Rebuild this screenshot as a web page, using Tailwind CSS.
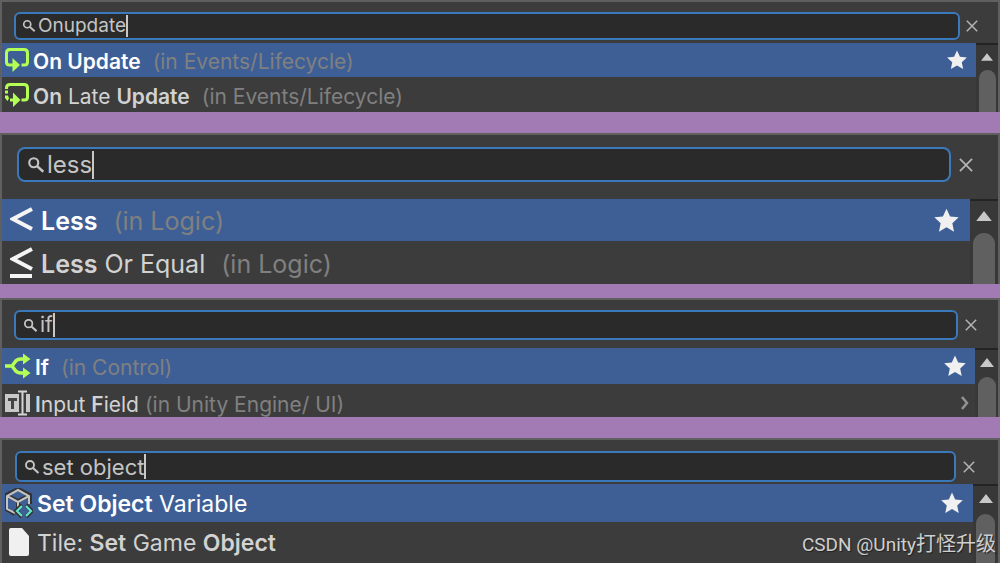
<!DOCTYPE html>
<html lang="en">
<head>
<meta charset="utf-8">
<meta name="viewport" content="width=device-width, initial-scale=1">
<title>Fuzzy finder searches</title>
<script src="https://cdn.jsdelivr.net/npm/@tailwindcss/browser@4"></script>
</head>
<body class="bg-[#a27bb5] font-['Inter','Liberation_Sans',sans-serif] text-[#d2d2d2]">
<svg class="hidden">
  <symbol id="search" viewBox="0 0 16 16"><g fill="none" stroke="#c4c4c4"><circle cx="6" cy="6" r="4" stroke-width="1.9"/><path d="M9 9l5.500 5" stroke-width="2.200"/></g></symbol>
  <symbol id="close" viewBox="0 0 12 12"><path d="M.8.8l10.400 10.400M11.200.8L.8 11.200" fill="none" stroke="#b4b4b4" stroke-width="1.500"/></symbol>
  <symbol id="star" viewBox="0 0 24 24"><path d="M12 1.500l3.200 6.900 7.600.8-5.600 5.200 1.500 7.500-6.700-3.800-6.700 3.800 1.500-7.500-5.600-5.200 7.600-.8z" fill="#f0f0f0"/></symbol>
  <symbol id="up" viewBox="0 0 14 9"><path d="M7 0l7 9H0z" fill="#c8c8c8"/></symbol>
</svg>
<main class="flex min-h-screen flex-col">

  <section class="flex h-28 flex-col overflow-hidden border-x-2 border-t-2 border-[#606060] bg-[#3c3c3c]">
    <div class="flex shrink-0 items-center gap-1.5 pt-2.5 pb-[3px] pl-3 pr-5">
      <label class="flex h-7 flex-1 cursor-text items-center rounded-md border-2 border-[#3a79bb] bg-[#2a2a2a] pl-1.5">
        <svg class="mr-0.5 size-[14px]"><use href="#search"/></svg>
        <input aria-label="Search nodes" value="Onupdate" class="[field-sizing:content] bg-transparent text-[19px] leading-6 text-[#c4c4c4] outline-none"><span class="h-[22px] w-0.5 bg-[#c8c8c8]"></span>
      </label>
      <button aria-label="Clear search"><svg class="size-3"><use href="#close"/></svg></button>
    </div>
    <div class="flex min-h-0 flex-1">
      <div class="flex-1 text-[21px]">
        <button class="flex h-[34px] w-full items-center bg-[#3e5f96] pl-[3px] text-white">
          <svg class="mr-1 size-6" viewBox="0 0 24 24"><path d="M8 17H4.500q-3 0-3-3V5q0-3.500 3.500-3.500h14q3.500 0 3.500 3.500v9q0 3-3 3h-3" fill="none" stroke="#b4ff55" stroke-width="3"/><path d="M7.500 10l7.500 7-7.500 7z" fill="#b4ff55"/></svg>
          <span class="pt-[3px] font-semibold">On Update</span><span class="ml-3 pt-[3px] text-[#808080]">(in Events/Lifecycle)</span>
          <svg class="ml-auto mr-2 size-[22px]"><use href="#star"/></svg>
        </button>
        <button class="flex h-9 w-full items-center pl-[3px]">
          <svg class="mr-1 size-6" viewBox="0 0 24 24"><path d="M1.500 6V5q0-3.500 3.500-3.500h14q3.500 0 3.500 3.500v9q0 3-3 3h-3" fill="none" stroke="#b4ff55" stroke-width="3"/><path d="M0 7.500h3v3H0zM0 12.500h3l1 3-1.500 2.500L0 15z" fill="#b4ff55"/><path d="M8 9.500l7.500 7.500-7.500 7v-5.500H5v-3h3z" fill="#b4ff55"/></svg>
          <span class="pt-[3px]"><b class="font-semibold">On</b> Late <b class="font-semibold">Update</b></span><span class="ml-3 pt-[3px] text-[#808080]">(in Events/Lifecycle)</span>
        </button>
      </div>
      <div class="flex w-[22px] flex-col items-center border-t-2 border-[#242424] bg-[#383838] pt-2">
        <svg class="mb-[9px] h-2 w-3 shrink-0"><use href="#up"/></svg>
        <div class="w-[17px] flex-1 rounded-t-full bg-[#606060]"></div>
      </div>
    </div>
  </section>

  <section class="mt-[21px] flex h-[151px] flex-col overflow-hidden border-x-2 border-t-2 border-[#606060] bg-[#3c3c3c]">
    <div class="flex shrink-0 items-center gap-2 pt-3 pb-[17px] pl-[15px] pr-[25px]">
      <label class="flex h-[35px] flex-1 cursor-text items-center rounded-lg border-2 border-[#3a79bb] bg-[#2a2a2a] pl-2">
        <svg class="mr-0.5 size-[18px]"><use href="#search"/></svg>
        <input aria-label="Search nodes" value="less" class="[field-sizing:content] bg-transparent text-2xl leading-7 text-[#c4c4c4] outline-none"><span class="h-7 w-0.5 bg-[#c8c8c8]"></span>
      </label>
      <button aria-label="Clear search"><svg class="size-3.5"><use href="#close"/></svg></button>
    </div>
    <div class="flex min-h-0 flex-1">
      <div class="flex-1 text-[25px]">
        <button class="flex h-[42px] w-full items-center bg-[#3e5f96] pl-2 text-white">
          <svg class="mr-2 h-[30px] w-[23px]" viewBox="0 0 23 30"><path d="M22 4L3 14l19 10" fill="none" stroke="#f4f4f4" stroke-width="4"/></svg>
          <span class="pt-[3px] font-semibold">Less</span><span class="ml-4 pt-[3px] text-[#808080]">(in Logic)</span>
          <svg class="ml-auto mr-2.5 size-[27px]"><use href="#star"/></svg>
        </button>
        <button class="flex h-[44px] w-full items-center pl-2">
          <svg class="mr-2 h-[32px] w-[23px]" viewBox="0 0 23 32"><path d="M22 2L3 12l19 10M0 29h22" fill="none" stroke="#f4f4f4" stroke-width="4"/></svg>
          <span class="pt-[3px]"><b class="font-semibold">Less</b> Or Equal</span><span class="ml-4 pt-[3px] text-[#808080]">(in Logic)</span>
        </button>
      </div>
      <div class="flex w-7 flex-col items-center border-t-2 border-[#242424] bg-[#383838] pt-2.5">
        <svg class="mb-3 h-2.5 w-4 shrink-0"><use href="#up"/></svg>
        <div class="w-[22px] flex-1 rounded-t-full bg-[#606060]"></div>
      </div>
    </div>
  </section>

  <section class="mt-3.5 flex h-[119px] flex-col overflow-hidden border-x-2 border-t-2 border-[#606060] bg-[#3c3c3c]">
    <div class="flex shrink-0 items-center gap-[7px] pt-2.5 pb-2 pl-3 pr-[21px]">
      <label class="flex h-[30px] flex-1 cursor-text items-center rounded-md border-2 border-[#3a79bb] bg-[#2a2a2a] pl-[7px]">
        <svg class="mr-0.5 size-[15px]"><use href="#search"/></svg>
        <input aria-label="Search nodes" value="if" class="[field-sizing:content] bg-transparent text-[21px] leading-6 text-[#c4c4c4] outline-none"><span class="h-6 w-0.5 bg-[#c8c8c8]"></span>
      </label>
      <button aria-label="Clear search"><svg class="size-3"><use href="#close"/></svg></button>
    </div>
    <div class="flex min-h-0 flex-1">
      <div class="flex-1 text-[21px]">
        <button class="flex h-9 w-full items-center bg-[#3e5f96] pl-[3px] text-white">
          <svg class="mr-1 size-[26px]" viewBox="0 0 26 26"><path d="M0 13h7M20 6h-4q-4 0-6 3l-3 4 3 4q2 3 6 3h4" fill="none" stroke="#b4ff55" stroke-width="3.500"/><path d="M18 .5l7.500 5.500-7.500 5.500zM18 14.500l7.500 5.500-7.500 5.500z" fill="#b4ff55"/></svg>
          <span class="pt-[3px] font-semibold">If</span><span class="ml-3 pt-[3px] text-[#808080]">(in Control)</span>
          <svg class="ml-auto mr-2 size-6"><use href="#star"/></svg>
        </button>
        <button class="flex h-[38px] w-full items-center pl-[3px]">
          <svg class="mr-1 size-[26px]" viewBox="0 0 26 26"><path d="M0 4h14v18H0zM21 4h4v18h-4z" fill="#c8c8c8"/><path d="M3 8h9v3H9v8H6v-8H3z" fill="#444"/><path d="M13 1.500h9M17.500 1v24M13 24.500h9" stroke="#d4d4d4" stroke-width="2"/></svg>
          <span class="pt-[3px]"><b class="font-semibold">I</b>nput <b class="font-semibold">F</b>ield</span><span class="ml-1.5 pt-[3px] text-[#808080]">(in Unity Engine/ UI)</span>
          <svg class="ml-auto mr-1.5 h-3.5 w-2" viewBox="0 0 8 14"><path d="M1 1l5 6-5 6" fill="none" stroke="#949494" stroke-width="2.500"/></svg>
        </button>
      </div>
      <div class="flex w-[23px] flex-col items-center border-t-2 border-[#242424] bg-[#383838] pt-2">
        <svg class="mb-2.5 h-[9px] w-[14px] shrink-0"><use href="#up"/></svg>
        <div class="w-[18px] flex-1 rounded-t-full bg-[#606060]"></div>
      </div>
    </div>
  </section>

  <section class="relative mt-[21px] flex min-h-[125px] flex-1 flex-col overflow-hidden border-x-2 border-t-2 border-[#606060] bg-[#3c3c3c]">
    <div class="flex shrink-0 items-center gap-[7px] pt-[11px] pb-0.5 pl-[13px] pr-[23px]">
      <label class="flex h-[31px] flex-1 cursor-text items-center rounded-md border-2 border-[#3a79bb] bg-[#2a2a2a] pl-[7px]">
        <svg class="mr-0.5 size-4"><use href="#search"/></svg>
        <input aria-label="Search nodes" value="set object" class="[field-sizing:content] bg-transparent text-[22px] leading-6 text-[#c4c4c4] outline-none"><span class="h-[25px] w-0.5 bg-[#c8c8c8]"></span>
      </label>
      <button aria-label="Clear search"><svg class="size-3"><use href="#close"/></svg></button>
    </div>
    <div class="flex min-h-0 flex-1">
      <div class="flex-1 text-[23px]">
        <button class="flex h-[38px] w-full items-center bg-[#3e5f96] pl-[3px] text-white">
          <svg class="mr-1 h-[30px] w-7" viewBox="0 0 28 30"><path d="M10 26l-9-5V7l12-6 12 6v9M1 7l12 6 12-6M13 13v11" fill="none" stroke="#333" stroke-width="4"/><path d="M10 25l-8-4V8l11-6 11 6v8M2 8l11 6 11-6M13 14v6" fill="none" stroke="#c4c4c4" stroke-width="2"/><path d="M17 17l-6 6 6 6M21 17l6 6-6 6" fill="none" stroke="#333" stroke-width="4"/><path d="M17 18l-5 5 5 5M21 18l5 5-5 5" fill="none" stroke="#62e3cb" stroke-width="2.200"/></svg>
          <span class="pt-[3px]"><b class="font-semibold">Set Object</b> Variable</span>
          <svg class="ml-auto mr-[9px] size-6"><use href="#star"/></svg>
        </button>
        <button class="flex h-10 w-full items-center pl-[7px]">
          <svg class="mr-2 h-7 w-5" viewBox="0 0 20 28"><path d="M2 0h11l7 8v18q0 2-2 2H2q-2 0-2-2V2q0-2 2-2z" fill="#f0f0f0"/></svg>
          <span class="pt-[3px]">Tile: <b class="font-semibold">Set</b> Game <b class="font-semibold">Object</b></span>
        </button>
      </div>
      <div class="flex w-[25px] flex-col items-center border-t-2 border-[#242424] bg-[#383838] pt-2">
        <svg class="mb-[11px] h-[9px] w-[14px] shrink-0"><use href="#up"/></svg>
        <div class="w-[19px] flex-1 rounded-t-full bg-[#606060]"></div>
      </div>
    </div>
    <p class="absolute right-0.5 bottom-1 font-['Roboto','Noto_Sans_CJK_SC',sans-serif] text-[19px] leading-7 text-[#cfcfcf] [text-shadow:1px_1px_1px_#222]">CSDN @Unity<span lang="zh-CN" class="text-xl leading-7">打怪升级</span></p>
  </section>
</main>
</body>
</html>
